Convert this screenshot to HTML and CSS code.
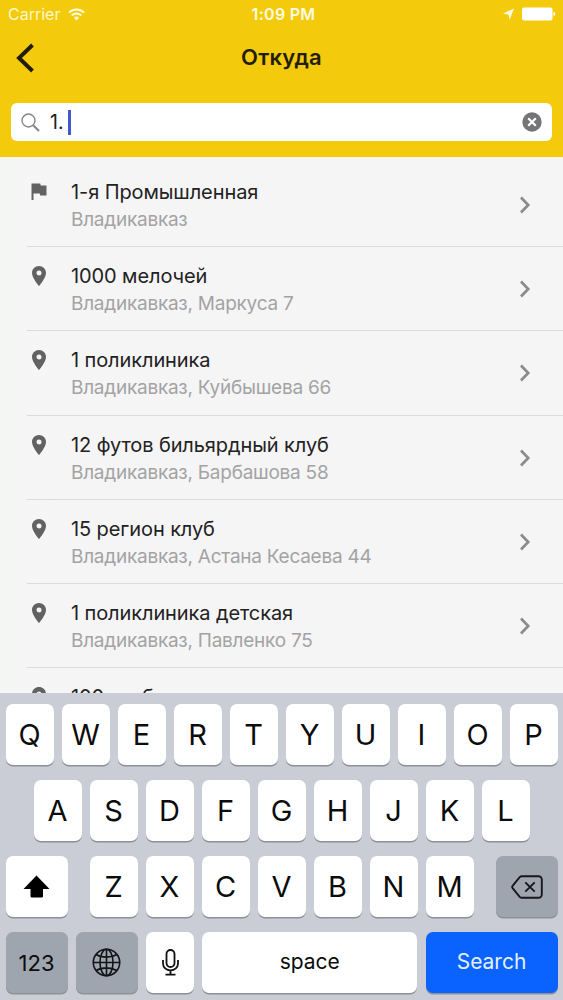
FILE: index.html
```html
<!DOCTYPE html>
<html lang="ru">
<head>
  <meta charset="UTF-8">
  <meta name="viewport" content="width=device-width, initial-scale=1.0">
  <title>Откуда</title>
  <link rel="stylesheet" href="styles.css">
</head>
<body>
  <svg class="sprite" width="0" height="0">
    <symbol id="pin" viewBox="0 0 14 20">
      <path fill-rule="evenodd" d="M7 0C3.1 0 0 3.1 0 7c0 5 7 13 7 13s7-8 7-13c0-3.900-3.100-7-7-7zm0 4.500a2.500 2.500 0 1 1 0 5 2.500 2.500 0 0 1 0-5z"/>
    </symbol>
    <symbol id="chevron" viewBox="0 0 12 18">
      <path d="M2 1.500L9.200 9 2 16.500" fill="none" stroke="#8b8b8d" stroke-width="2.700"/>
    </symbol>
  </svg>

  <div class="screen">
    <header class="header">
      <div class="status">
        <div class="status-left">
          <span>Carrier</span>
          <svg width="17" height="13" viewBox="0 0 17 13" fill="none" stroke="#fffbe0" stroke-width="2">
            <path d="M1 4.600a10.600 10.600 0 0 1 15 0"/>
            <path d="M3.700 7.400a6.800 6.800 0 0 1 9.600 0"/>
            <path d="M8.500 12.500L5.900 9.800a3.800 3.800 0 0 1 5.200 0z" fill="#fffbe0" stroke="none"/>
          </svg>
        </div>
        <div class="status-time">1:09 PM</div>
        <div class="status-right">
          <svg width="11" height="12" viewBox="0 0 11 12" fill="#fffbe0"><path d="M11 0.500L6.600 12L5.600 6.800L0 5.600z"/></svg>
          <svg width="34" height="14" viewBox="0 0 34 14" fill="#fff">
            <rect x="0" y="0.500" width="30.500" height="13" rx="2"/>
            <path d="M31.500 4.800c2.300 0.600 2.300 3.800 0 4.400z"/>
          </svg>
        </div>
      </div>
      <div class="navbar">
        <svg class="back" width="18" height="30" viewBox="0 0 18 30"><path d="M16.500 2L3 15l13.500 13" fill="none" stroke="#221d08" stroke-width="3.900"/></svg>
        <h1>Откуда</h1>
      </div>
      <div class="search">
        <svg width="19" height="19" viewBox="0 0 19 19" fill="none" stroke="#858585">
          <circle cx="7.500" cy="7.500" r="6.500" stroke-width="1.400"/>
          <path d="M12.200 12.200L18 18" stroke-width="2"/>
        </svg>
        <span class="query">1.</span>
        <span class="caret"></span>
        <svg class="clear" width="20" height="20" viewBox="0 0 20 20">
          <circle cx="10" cy="10" r="9.700" fill="#757577"/>
          <path d="M6.200 6.200l7.600 7.600M13.800 6.200l-7.600 7.600" stroke="#fff" stroke-width="2.200"/>
        </svg>
      </div>
    </header>

    <main class="list">
      <div class="row">
        <svg class="flag" width="16" height="17" viewBox="0 0 16 17"><path d="M0.500 0.500h8.700l0.600 2h5.700v10H9.200l-0.500-2H2.500V17h-2z"/></svg>
        <div class="place"><div class="name">1-я Промышленная</div><div class="address">Владикавказ</div></div>
        <svg class="arrow"><use href="#chevron"/></svg>
      </div>
      <div class="row">
        <svg class="pin"><use href="#pin"/></svg>
        <div class="place"><div class="name">1000 мелочей</div><div class="address">Владикавказ, Маркуса 7</div></div>
        <svg class="arrow"><use href="#chevron"/></svg>
      </div>
      <div class="row">
        <svg class="pin"><use href="#pin"/></svg>
        <div class="place"><div class="name">1 поликлиника</div><div class="address">Владикавказ, Куйбышева 66</div></div>
        <svg class="arrow"><use href="#chevron"/></svg>
      </div>
      <div class="row">
        <svg class="pin"><use href="#pin"/></svg>
        <div class="place"><div class="name">12 футов бильярдный клуб</div><div class="address">Владикавказ, Барбашова 58</div></div>
        <svg class="arrow"><use href="#chevron"/></svg>
      </div>
      <div class="row">
        <svg class="pin"><use href="#pin"/></svg>
        <div class="place"><div class="name">15 регион клуб</div><div class="address">Владикавказ, Астана Кесаева 44</div></div>
        <svg class="arrow"><use href="#chevron"/></svg>
      </div>
      <div class="row">
        <svg class="pin"><use href="#pin"/></svg>
        <div class="place"><div class="name">1 поликлиника детская</div><div class="address">Владикавказ, Павленко 75</div></div>
        <svg class="arrow"><use href="#chevron"/></svg>
      </div>
      <div class="row">
        <svg class="pin"><use href="#pin"/></svg>
        <div class="place"><div class="name">100 труб</div></div>
      </div>
    </main>

    <div class="keyboard">
      <div class="keys">
        <div class="key">Q</div><div class="key">W</div><div class="key">E</div><div class="key">R</div><div class="key">T</div><div class="key">Y</div><div class="key">U</div><div class="key">I</div><div class="key">O</div><div class="key">P</div>
      </div>
      <div class="keys">
        <div class="key">A</div><div class="key">S</div><div class="key">D</div><div class="key">F</div><div class="key">G</div><div class="key">H</div><div class="key">J</div><div class="key">K</div><div class="key">L</div>
      </div>
      <div class="keys spread">
        <div class="key wide">
          <svg width="27" height="23" viewBox="0 0 27 23"><path d="M13.500 0.500L26.500 14H20v7.200a1.300 1.300 0 0 1-1.300 1.300H8.800a1.300 1.300 0 0 1-1.300-1.300V14H0.500z"/></svg>
        </div>
        <div class="letters">
          <div class="key">Z</div><div class="key">X</div><div class="key">C</div><div class="key">V</div><div class="key">B</div><div class="key">N</div><div class="key">M</div>
        </div>
        <div class="key wide dark">
          <svg width="32" height="24" viewBox="0 0 32 24" fill="none" stroke="#15191d" stroke-width="1.900" stroke-linejoin="round">
            <path d="M11 1.200h16.500a3.300 3.300 0 0 1 3.300 3.300v15a3.300 3.300 0 0 1-3.300 3.300H11c-1 0-1.700-0.400-2.300-1L1.800 13.400c-0.800-0.900-0.800-1.900 0-2.800l6.900-8.400c0.600-0.600 1.300-1 2.300-1z"/>
            <path d="M14.300 7.300l9.400 9.400M23.700 7.300l-9.400 9.400"/>
          </svg>
        </div>
      </div>
      <div class="keys spread">
        <div class="key wide dark label">123</div>
        <div class="key wide dark">
          <svg width="29" height="29" viewBox="0 0 29 29" fill="none" stroke="#111418" stroke-width="1.600">
            <circle cx="14.500" cy="14.500" r="13.200"/>
            <ellipse cx="14.500" cy="14.500" rx="6.500" ry="13.200"/>
            <path d="M14.500 1.300v26.400M1.300 14.500h26.400M4.200 6.500c5.500 3.500 15 3.500 20.600 0M4.200 22.500c5.500-3.500 15-3.500 20.600 0"/>
          </svg>
        </div>
        <div class="key">
          <svg width="17" height="27" viewBox="0 0 17 27" fill="none" stroke="#111" stroke-width="1.800">
            <rect x="4.500" y="1" width="8" height="17" rx="4"/>
            <path d="M1 11v3.500a7.500 7 0 0 0 15 0V11M8.500 21.500v4M3.500 25.700h10"/>
          </svg>
        </div>
        <div class="key space label">space</div>
        <div class="key go label">Search</div>
      </div>
    </div>
  </div>
</body>
</html>
```
FILE: styles.css
```css
body {
  margin: 0;
  font-family: Inter, "Liberation Sans", sans-serif;
  color: #222;
}

.sprite {
  display: block;
}

.screen {
  width: 563px;
  height: 1000px;
  display: flex;
  flex-direction: column;
  overflow: hidden;
  background: #f6f5f6;
}

.header {
  height: 157px;
  flex-shrink: 0;
  background: #f3ca0c;
}

.status {
  display: grid;
  grid-template-columns: 1fr auto 1fr;
  align-items: center;
  height: 28px;
  padding: 0 7px 0 8px;
  font-size: 16px;
  color: #fff8cb;
}

.status-left,
.status-right {
  display: flex;
  align-items: center;
  gap: 8px;
}

.status-right {
  justify-content: flex-end;
}

.status-time {
  padding-left: 3px;
  font-weight: 600;
  letter-spacing: 0.300px;
  color: #fffbe0;
}

.navbar {
  display: grid;
  grid-template-columns: 60px 1fr 60px;
  align-items: center;
  height: 59px;
}

.back {
  margin-left: 16px;
}

h1 {
  margin: -2px 0 0;
  font-size: 22px;
  font-weight: 600;
  letter-spacing: 0.200px;
  text-align: center;
  color: #221d08;
}

.search {
  display: flex;
  align-items: center;
  height: 38px;
  margin: 16px 11px 0;
  padding: 0 10px 0 10px;
  box-sizing: border-box;
  border-radius: 6px;
  background: #fff;
}

.query {
  margin-left: 10px;
  font-size: 19.500px;
}

.caret {
  width: 3px;
  height: 25px;
  margin-left: 4px;
  background: #4358cf;
}

.clear {
  margin-left: auto;
}

.list {
  flex: 1;
  min-height: 0;
  padding: 6px 0 0 27px;
  overflow: hidden;
  background: linear-gradient(to right, #f4f6f4, #f6f5f6 90px);
}

.row {
  display: flex;
  height: 84.200px;
  box-sizing: border-box;
  border-bottom: 1px solid #dbdbdc;
  fill: #626262;
}

.flag {
  margin: 20px 0 0 4px;
}

.pin {
  width: 14px;
  height: 20px;
  margin: 19px 1px 0 5px;
}

.place {
  flex: 1;
  margin: 15px 0 0 24px;
}

.name {
  font-size: 20px;
  line-height: 28px;
  letter-spacing: -0.100px;
}

.address {
  font-size: 19px;
  line-height: 28px;
  letter-spacing: -0.250px;
  color: #a3a3a4;
}

.arrow {
  width: 12px;
  height: 18px;
  margin: 33px 32px 0 0;
}

.keyboard {
  display: flex;
  flex-direction: column;
  gap: 15px;
  height: 307px;
  padding: 11px 5.500px 0;
  box-sizing: border-box;
  background: #cacdd5;
}

.keys,
.letters {
  display: flex;
  justify-content: center;
  gap: 8px;
}

.spread {
  justify-content: space-between;
}

.key {
  display: flex;
  align-items: center;
  justify-content: center;
  width: 48px;
  height: 61px;
  border-radius: 7px;
  background: #fff;
  box-shadow: 0 1.500px 0 #8d9095;
  font-size: 29px;
  color: #0c0c0c;
}

.wide {
  width: 62px;
}

.dark {
  background: #9fa5ae;
}

.label {
  padding-bottom: 2px;
  box-sizing: border-box;
  font-size: 21px;
}

.dark.label {
  padding-bottom: 0;
  font-size: 22px;
}

.space {
  width: 215px;
}

.go {
  width: 132px;
  background: #0a62ff;
  color: #e4f0ff;
}
```
